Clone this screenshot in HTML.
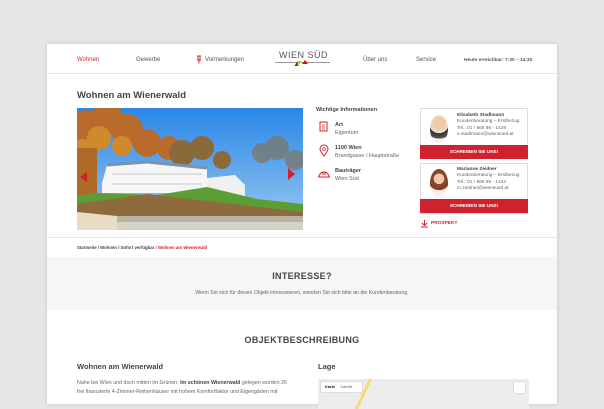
<!DOCTYPE html>
<html><head><meta charset="utf-8"><style>
*{margin:0;padding:0;box-sizing:border-box}
body{width:604px;height:400px;overflow:hidden;background:#e6e6e6;font-family:"Liberation Sans",sans-serif;color:#444;position:relative}
.page{position:absolute;left:47px;top:44px;width:510px;height:360px;background:#fff;box-shadow:0 0 4px rgba(0,0,0,.15)}
.a{position:absolute;white-space:nowrap}
.nav{font-size:6px;color:#555;top:13px}
.red{color:#d0222e}
.btn{position:absolute;background:#d0222e;color:#fff;font-size:4.6px;font-weight:bold;text-align:center;line-height:14px;height:14px}
.card{position:absolute;border:1px solid #ddd;background:#fff}
.small{font-size:4.8px;line-height:6.3px;color:#666}
</style></head><body>
<div class="page">
 <div class="a nav red" style="left:30px">Wohnen</div>
 <div class="a nav" style="left:89px">Gewerbe</div>
 <svg class="a" style="left:149px;top:11px" width="6" height="9"><path d="M1 1h4M2 1v4M4 1v4M1 5h4M3 5v3.5" stroke="#d0222e" stroke-width=".9" fill="none"/></svg>
 <div class="a nav" style="left:158px">Vormerkungen</div>
 <div class="a" style="left:232px;top:6px;font-size:9px;letter-spacing:.5px;color:#555">WIEN SÜD</div>
 <div class="a" style="left:228px;top:18px;width:55px;height:1px;background:#999"></div>
 <div class="a" style="left:249px;top:17px;width:4px;height:5px;background:linear-gradient(60deg,#333 40%,#f5c400 40%);transform:skewX(-30deg)"></div>
 <div class="a" style="left:255px;top:16px;width:0;height:0;border-left:3px solid transparent;border-right:3px solid transparent;border-bottom:4px solid #e30613"></div>
 <div class="a nav" style="left:316px">Über uns</div>
 <div class="a nav" style="left:369px">Service</div>
 <div class="a nav" style="left:417px;font-size:4.8px;font-weight:bold;top:14px">Heute erreichbar: 7:30 – 14:30</div>
 <div class="a" style="left:0;top:29px;width:510px;height:1px;background:#e6e6e6"></div>

 <div class="a" style="left:30px;top:46px;font-size:9.5px;font-weight:bold;color:#444">Wohnen am Wienerwald</div>
 <svg class="a" style="left:30px;top:64px" width="226" height="122" viewBox="0 0 226 122">
  <defs><linearGradient id="s" x1="0" y1="0" x2="0" y2="1"><stop offset="0" stop-color="#2a86e8"/><stop offset="1" stop-color="#9ccaf0"/></linearGradient></defs>
  <rect width="226" height="122" fill="url(#s)"/>
  <g fill="#b86b2a"><circle cx="10" cy="20" r="18"/><circle cx="30" cy="10" r="16"/><circle cx="50" cy="22" r="16"/><circle cx="70" cy="35" r="14"/><circle cx="92" cy="40" r="12"/></g>
  <g fill="#d08a2c"><circle cx="5" cy="45" r="14"/><circle cx="22" cy="30" r="12"/><circle cx="45" cy="38" r="10"/></g>
  <g fill="#8a6a3a"><circle cx="105" cy="45" r="13"/><circle cx="125" cy="40" r="12"/><circle cx="145" cy="52" r="9"/></g>
  <g fill="#7a7a70" opacity=".8"><circle cx="185" cy="45" r="10"/><circle cx="200" cy="40" r="12"/><circle cx="218" cy="52" r="10"/></g>
  <path d="M0 40h20v60H0z" fill="#b06a28"/>
  <path d="M25 75l5-18 40-3 60 6v25H25z" fill="#f6f6f6"/>
  <path d="M30 57l40-3 60 6" stroke="#7c93ad" stroke-width="3" fill="none"/>
  <path d="M35 66h90M35 76h90" stroke="#c8c8c8" stroke-width="1"/>
  <path d="M130 70l28-3 10 10v27h-38z" fill="#f0f0f0"/>
  <path d="M0 88l20-3 60 2 50-8 50 12 46 5v10H0z" fill="#5c9e36"/>
  <path d="M0 96l70-10 156 18v12H0z" fill="#8e6a3c"/>
  <path d="M40 108h186v6H40z" fill="#b9b3a6"/>
  <path d="M0 104l40 4v14H0z" fill="#e8dcc4"/>
  <path d="M40 114h186v8H40z" fill="#d5d2c6"/>
  <path d="M10 64l-7 5 7 5z" fill="#d0222e"/><path d="M211 60l7 6-7 6z" fill="#d0222e"/>
 </svg>

 <div class="a" style="left:269px;top:63px;font-size:5.5px;font-weight:bold;color:#444">Wichtige Informationen</div>
 <svg class="a" style="left:271px;top:77px" width="12" height="12"><rect x="2" y="1" width="7" height="9" fill="none" stroke="#d0222e"/><path d="M4 4h3M4 6h3M4 8h3" stroke="#d0222e" stroke-width=".8"/></svg>
 <div class="a" style="left:288px;top:77px;font-size:5.5px;line-height:8px"><b>Art</b><br><span style="color:#666">Eigentum</span></div>
 <svg class="a" style="left:271px;top:100px" width="12" height="14"><path d="M6 12C3 8 2 6 2 5a4 4 0 0 1 8 0c0 1-1 3-4 7z" fill="none" stroke="#d0222e"/><circle cx="6" cy="5" r="1.4" fill="none" stroke="#d0222e" stroke-width=".8"/></svg>
 <div class="a" style="left:288px;top:100px;font-size:5.5px;line-height:8px"><b>1100 Wien</b><br><span style="color:#666">Brandgasse / Hauptstraße</span></div>
 <svg class="a" style="left:270px;top:124px" width="14" height="12"><path d="M1 9h12M2 9a5 5 0 0 1 10 0M6 4v3M8 4v3" fill="none" stroke="#d0222e"/></svg>
 <div class="a" style="left:288px;top:123px;font-size:5.5px;line-height:8px"><b>Bauträger</b><br><span style="color:#666">Wien Süd</span></div>

 <div class="card" style="left:373px;top:64px;width:108px;height:51px"></div>
 <div class="a" style="left:383px;top:71px;width:18px;height:28px;border-radius:50%;background:radial-gradient(circle at 50% 30%,#f0c9a8 28%,#e8d8b0 30%,#e8e0cc 45%,#333 46%,#555 70%,#f7f0ec 71%)"></div>
 <div class="a small" style="left:410px;top:69px"><b style="color:#444">Elisabeth Stadlmann</b><br>Kundenberatung – Erstbezug<br>Tel.: 01 / 866 95 - 1429<br>e.stadlmann@wiensued.at</div>
 <div class="btn" style="left:373px;top:101px;width:108px">SCHREIBEN SIE UNS!</div>
 <div class="card" style="left:373px;top:119px;width:108px;height:51px"></div>
 <div class="a" style="left:383px;top:125px;width:18px;height:28px;border-radius:50%;background:radial-gradient(circle at 50% 35%,#f2c8a8 25%,#8a4a2e 27%,#7a3e26 55%,#f3ded0 56%,#f7f0ec 70%)"></div>
 <div class="a small" style="left:410px;top:123px"><b style="color:#444">Marianne Zeidner</b><br>Kundenberatung – Erstbezug<br>Tel.: 01 / 866 95 - 1423<br>m.zeidner@wiensued.at</div>
 <div class="btn" style="left:373px;top:155px;width:108px">SCHREIBEN SIE UNS!</div>
 <svg class="a" style="left:373px;top:175px" width="9" height="9"><path d="M4.5 1v5M2 4l2.5 2.5L7 4M1 8h7" stroke="#d0222e" fill="none"/></svg>
 <div class="a red" style="left:384px;top:177px;font-size:4.8px;font-weight:bold">PROSPEKT</div>

 <div class="a" style="left:0;top:193px;width:510px;height:1px;background:#e6e6e6"></div>
 <div class="a" style="left:30px;top:201px;font-size:4.3px;font-weight:bold;color:#444">Startseite / Wohnen / Sofort verfügbar <span class="red">/ Wohnen am Wienerwald</span></div>
 <div class="a" style="left:0;top:213px;width:510px;height:53px;background:#f6f6f6"></div>
 <div class="a" style="left:0;top:227px;width:510px;text-align:center;font-size:9px;font-weight:bold;letter-spacing:.3px">INTERESSE?</div>
 <div class="a" style="left:0;top:246px;width:510px;text-align:center;font-size:5.2px;color:#666">Wenn Sie sich für dieses Objekt interessieren, wenden Sie sich bitte an die Kundenberatung.</div>
 <div class="a" style="left:0;top:291px;width:510px;text-align:center;font-size:9px;font-weight:bold;letter-spacing:.3px">OBJEKTBESCHREIBUNG</div>
 <div class="a" style="left:30px;top:318px;font-size:7.5px;font-weight:bold">Wohnen am Wienerwald</div>
 <div class="a" style="left:271px;top:318px;font-size:7.5px;font-weight:bold">Lage</div>
 <div class="a" style="left:30px;top:335px;font-size:5.3px;line-height:9px;color:#666">Nahe bei Wien und doch mitten im Grünen: <b style="color:#444">Im schönen Wienerwald</b> gelegen wurden 26<br>frei finanzierte 4-Zimmer-Reihenhäuser mit hohem Komfortfaktor und Eigengärten mit</div>
 <div class="a" style="left:271px;top:335px;width:211px;height:30px;background:#ececec"></div>
 <div class="a" style="left:315px;top:335px;width:3px;height:30px;background:#f7d96a;transform:skewX(-25deg)"></div>
 <div class="a" style="left:274px;top:338px;width:41px;height:10px;background:#fff;font-size:4px;line-height:10px;box-shadow:0 0 1px #999"><b style="margin-left:4px;color:#222">Karte</b> <span style="margin-left:4px;color:#666">Satellit</span></div>
 <div class="a" style="left:467px;top:338px;width:11px;height:11px;background:#fff;box-shadow:0 0 1px #999"></div>
</div>
</body></html>
